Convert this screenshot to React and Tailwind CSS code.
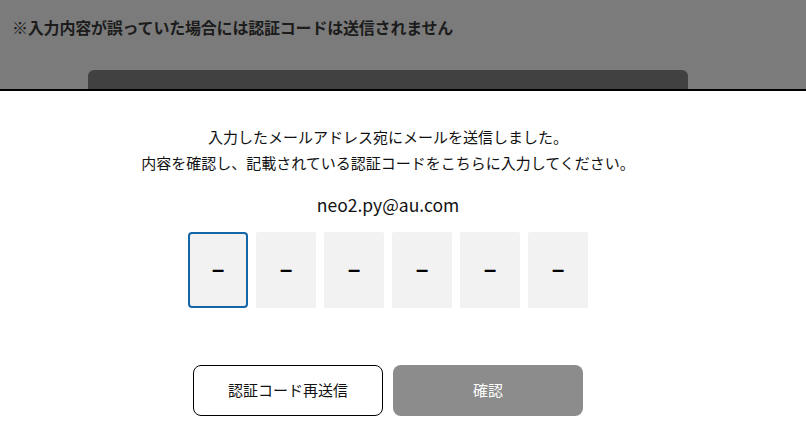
export default function App() {
  const font = { fontFamily: '"Noto Sans CJK JP", "Noto Sans", sans-serif' };
  return (
    <div className="w-[806px] h-[444px] overflow-hidden bg-white" style={font}>
      <div className="h-[89px] bg-[#7b7b7b] flex flex-col">
        <p className="pl-3 pt-[17px] text-[16px] leading-5 font-bold text-[#1c1c1c] tracking-[-0.2px]">
          ※入力内容が誤っていた場合には認証コードは送信されません
        </p>
        <div className="mt-auto ml-[88px] w-[600px] h-[19px] rounded-t-md bg-[#414141]" />
      </div>
      <div className="h-[2px] bg-black" />
      <div className="w-[776px] flex flex-col items-center text-[#111]">
        <p className="pt-[33px] text-[15px] leading-[26px] text-center">
          入力したメールアドレス宛にメールを送信しました。
          <br />
          内容を確認し、記載されている認証コードをこちらに入力してください。
        </p>
        <p className="mt-[16px] text-[17.5px] leading-[26px]">neo2.py@au.com</p>
        <div className="mt-[14px] flex gap-2">
          {[0, 1, 2, 3, 4, 5].map((i) => (
            <div
              key={i}
              className={
                i === 0
                  ? "w-[60px] h-[76px] rounded-[4px] border-2 border-[#1566a8] bg-[#f2f2f2] flex items-center justify-center"
                  : "w-[60px] h-[76px] rounded-[2px] bg-[#f2f2f2] flex items-center justify-center"
              }
            >
              <span className="text-[22px] font-bold leading-none text-black" style={{ fontFamily: '"Liberation Sans", sans-serif' }}>–</span>
            </div>
          ))}
        </div>
        <div className="mt-[57px] flex gap-[10px]">
          <button className="w-[190px] h-[51px] rounded-lg border border-black bg-white text-[15px] text-[#111]">
            認証コード再送信
          </button>
          <button className="w-[190px] h-[51px] rounded-lg bg-[#8c8c8c] text-[15px] text-white">
            確認
          </button>
        </div>
      </div>
    </div>
  );
}
